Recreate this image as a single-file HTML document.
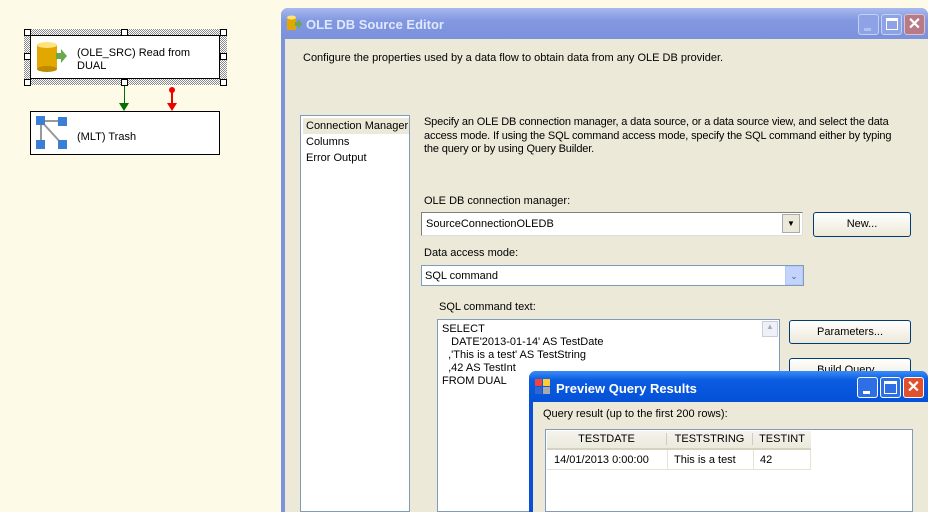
<!DOCTYPE html>
<html><head><style>
*{margin:0;padding:0;box-sizing:border-box}
body{width:928px;height:512px;overflow:hidden;background:#fdfae8;font-family:"Liberation Sans",sans-serif;font-size:11px;color:#000;position:relative}
.a{position:absolute}
.h{position:absolute;width:7px;height:7px;background:#fff;border:1px solid #000}
.btn{position:absolute;background:linear-gradient(#fff,#ece9d8);border:1px solid #003c74;border-radius:3px;text-align:center;line-height:22px}
</style></head><body>
<!-- designer nodes -->
<div class="a" style="left:24px;top:29px;width:203px;height:56px;background:repeating-conic-gradient(#888 0 25%,#fff 0 50%) 0 0/2px 2px"></div>
<div class="a" style="left:30px;top:35px;width:190px;height:44px;background:#fff;border:1px solid #000"></div>
<div class="h" style="left:24px;top:29px"></div><div class="h" style="left:121px;top:29px"></div><div class="h" style="left:220px;top:29px"></div>
<div class="h" style="left:24px;top:53px"></div><div class="h" style="left:220px;top:53px"></div>
<div class="h" style="left:24px;top:79px"></div><div class="h" style="left:121px;top:79px"></div><div class="h" style="left:220px;top:79px"></div>
<svg class="a" style="left:36px;top:41px" width="34" height="34"><rect x="1" y="4" width="20" height="24" fill="#e0a800"/><ellipse cx="11" cy="28" rx="10" ry="3" fill="#c08a00"/><ellipse cx="11" cy="4" rx="10" ry="3" fill="#ffe27a"/><path d="M20 12h5v-4l6 7-6 7v-4h-5z" fill="#6aa84f"/></svg>
<div class="a" style="left:77px;top:47px;line-height:13px">(OLE_SRC) Read from<br>DUAL</div>
<div class="a" style="left:30px;top:111px;width:190px;height:44px;background:#fff;border:1px solid #000"></div>
<svg class="a" style="left:36px;top:116px" width="34" height="34"><path d="M5 5L5 28M5 5L26 5M5 5L26 28" stroke="#999" stroke-width="2"/><rect x="0" y="0" width="9" height="9" fill="#3a7fd5"/><rect x="22" y="1" width="9" height="9" fill="#3a7fd5"/><rect x="0" y="24" width="9" height="9" fill="#3a7fd5"/><rect x="22" y="24" width="9" height="9" fill="#3a7fd5"/></svg>
<div class="a" style="left:77px;top:131px">(MLT) Trash</div>
<div class="a" style="left:124px;top:86px;width:1px;height:20px;background:#007000"></div>
<div class="a" style="left:119px;top:103px;border-left:5px solid transparent;border-right:5px solid transparent;border-top:8px solid #007000"></div>
<div class="a" style="left:171px;top:92px;width:2px;height:14px;background:#e00"></div>
<div class="a" style="left:169px;top:87px;width:6px;height:6px;border-radius:3px;background:#e00"></div>
<div class="a" style="left:167px;top:103px;border-left:5px solid transparent;border-right:5px solid transparent;border-top:8px solid #e00"></div>
<!-- editor window -->
<div class="a" style="left:281px;top:8px;width:647px;height:504px;background:#7d93dc;border-radius:7px 7px 0 0"></div>
<div class="a" style="left:281px;top:8px;width:647px;height:31px;background:linear-gradient(#a8b9ef,#8298e0 40%,#7b91dc);border-radius:7px 7px 0 0"></div>
<svg class="a" style="left:286px;top:15px" width="16" height="18"><rect x="1" y="2" width="9" height="13" fill="#e0a800"/><ellipse cx="5.5" cy="2.5" rx="4.5" ry="2" fill="#ffe27a"/><path d="M9 7h3v-3l4 5-4 5v-3h-3z" fill="#6aa84f"/></svg>
<div class="a" style="left:306px;top:17px;font-size:13px;font-weight:bold;color:#e0e8ff">OLE DB Source Editor</div>
<div class="a" style="left:858px;top:14px;width:21px;height:21px;background:#8ea3e6;border:1px solid #c4d0f4;border-radius:3px"><div class="a" style="left:5px;top:13px;width:7px;height:3px;background:#b0c0f0"></div></div>
<div class="a" style="left:881px;top:14px;width:21px;height:21px;background:#8ea3e6;border:1px solid #c4d0f4;border-radius:3px"><div class="a" style="left:4px;top:3px;width:12px;height:12px;border:1px solid #fff;border-top-width:3px"></div></div>
<div class="a" style="left:904px;top:14px;width:21px;height:21px;background:#b87a86;border:1px solid #e0c0c8;border-radius:3px;color:#fff;font-size:16px;font-weight:bold;text-align:center;line-height:19px">✕</div>
<div class="a" style="left:285px;top:39px;width:643px;height:473px;background:#ece9d8"></div>
<div class="a" style="left:303px;top:52px">Configure the properties used by a data flow to obtain data from any OLE DB provider.</div>
<div class="a" style="left:300px;top:115px;width:110px;height:397px;background:#fff;border:1px solid #7f9db9;line-height:16px;padding:2px 0 0 5px">
<div style="background:#ece9d8;margin-left:-3px;padding-left:3px">Connection Manager</div><div>Columns</div><div>Error Output</div></div>
<div class="a" style="left:424px;top:116px;width:500px;line-height:13.5px;letter-spacing:-0.15px">Specify an OLE DB connection manager, a data source, or a data source view, and select the data<br>access mode. If using the SQL command access mode, specify the SQL command either by typing<br>the query or by using Query Builder.</div>
<div class="a" style="left:424px;top:195px">OLE DB connection manager:</div>
<div class="a" style="left:421px;top:212px;width:382px;height:24px;background:#fff;border:1px solid #7f7f7f;border-right-color:#ddd;border-bottom-color:#ddd;padding:5px 4px">SourceConnectionOLEDB</div>
<div class="a" style="left:782px;top:214px;width:18px;height:19px;background:#ece9d8;border:1px solid #aaa;font-size:8px;text-align:center;line-height:18px">▼</div>
<div class="btn" style="left:813px;top:212px;width:98px;height:25px">New...</div>
<div class="a" style="left:424px;top:247px">Data access mode:</div>
<div class="a" style="left:421px;top:265px;width:383px;height:21px;background:#fff;border:1px solid #7f9db9;padding:4px 3px">SQL command</div>
<div class="a" style="left:785px;top:266px;width:18px;height:19px;background:#c3d3fd;border:1px solid #b6c8f4;color:#4d6185;font-size:9px;text-align:center;line-height:18px">⌄</div>
<div class="a" style="left:439px;top:301px">SQL command text:</div>
<div class="a" style="left:437px;top:319px;width:343px;height:193px;background:#fff;border:1px solid #7f9db9;padding:3px 4px;line-height:13px">SELECT<br>&nbsp;&nbsp;&nbsp;DATE'2013-01-14' AS TestDate<br>&nbsp;&nbsp;,'This is a test' AS TestString<br>&nbsp;&nbsp;,42 AS TestInt<br>FROM DUAL</div>
<div class="a" style="left:762px;top:321px;width:16px;height:16px;background:#eef1f8;border:1px solid #ccd;color:#aab;font-size:8px;text-align:center">▲</div>
<div class="btn" style="left:789px;top:320px;width:122px;height:24px">Parameters...</div>
<div class="btn" style="left:789px;top:358px;width:122px;height:24px">Build Query...</div>
<!-- preview -->
<div class="a" style="left:529px;top:371px;width:399px;height:141px;background:#0a4fd6;border-radius:7px 7px 0 0"></div>
<div class="a" style="left:529px;top:371px;width:399px;height:31px;background:linear-gradient(#3a8cf8,#0a5ce0 30%,#0451d8);border-radius:7px 7px 0 0"></div>
<svg class="a" style="left:535px;top:379px" width="16" height="16"><rect x="0" y="0" width="7" height="7" fill="#e44"/><rect x="8" y="0" width="7" height="7" fill="#fc3"/><rect x="0" y="8" width="7" height="7" fill="#36c"/><rect x="8" y="8" width="7" height="7" fill="#aaa"/></svg>
<div class="a" style="left:556px;top:381px;font-size:13px;font-weight:bold;color:#fff">Preview Query Results</div>
<div class="a" style="left:857px;top:377px;width:21px;height:21px;background:#2f6fe6;border:1px solid #fff;border-radius:3px"><div class="a" style="left:5px;top:13px;width:7px;height:3px;background:#fff"></div></div>
<div class="a" style="left:880px;top:377px;width:21px;height:21px;background:#2f6fe6;border:1px solid #fff;border-radius:3px"><div class="a" style="left:3px;top:3px;width:13px;height:13px;border:1px solid #fff;border-top-width:3px"></div></div>
<div class="a" style="left:903px;top:377px;width:21px;height:21px;background:#e0502a;border:1px solid #fff;border-radius:3px;color:#fff;font-size:16px;font-weight:bold;text-align:center;line-height:19px">✕</div>
<div class="a" style="left:533px;top:402px;width:395px;height:110px;background:#ece9d8"></div>
<div class="a" style="left:543px;top:408px">Query result (up to the first 200 rows):</div>
<div class="a" style="left:545px;top:429px;width:368px;height:83px;background:#fff;border:1px solid #7f9db9"></div>
<div class="a" style="left:547px;top:431px;width:264px;height:19px;background:linear-gradient(#f4f3ee,#ebeadb);border-bottom:2px solid #d6d2c2"></div>
<div class="a" style="left:547px;top:433px;width:120px;text-align:center;border-right:1px solid #ccc">TESTDATE</div>
<div class="a" style="left:667px;top:433px;width:86px;text-align:center;border-right:1px solid #ccc">TESTSTRING</div>
<div class="a" style="left:753px;top:433px;width:58px;text-align:center">TESTINT</div>
<div class="a" style="left:547px;top:450px;width:264px;height:20px;border-bottom:1px solid #e6e3d3"></div>
<div class="a" style="left:667px;top:450px;width:1px;height:20px;background:#e6e3d3"></div>
<div class="a" style="left:753px;top:450px;width:1px;height:20px;background:#e6e3d3"></div>
<div class="a" style="left:810px;top:450px;width:1px;height:20px;background:#e6e3d3"></div>
<div class="a" style="left:554px;top:454px">14/01/2013 0:00:00</div>
<div class="a" style="left:674px;top:454px">This is a test</div>
<div class="a" style="left:760px;top:454px">42</div>
</body></html>
